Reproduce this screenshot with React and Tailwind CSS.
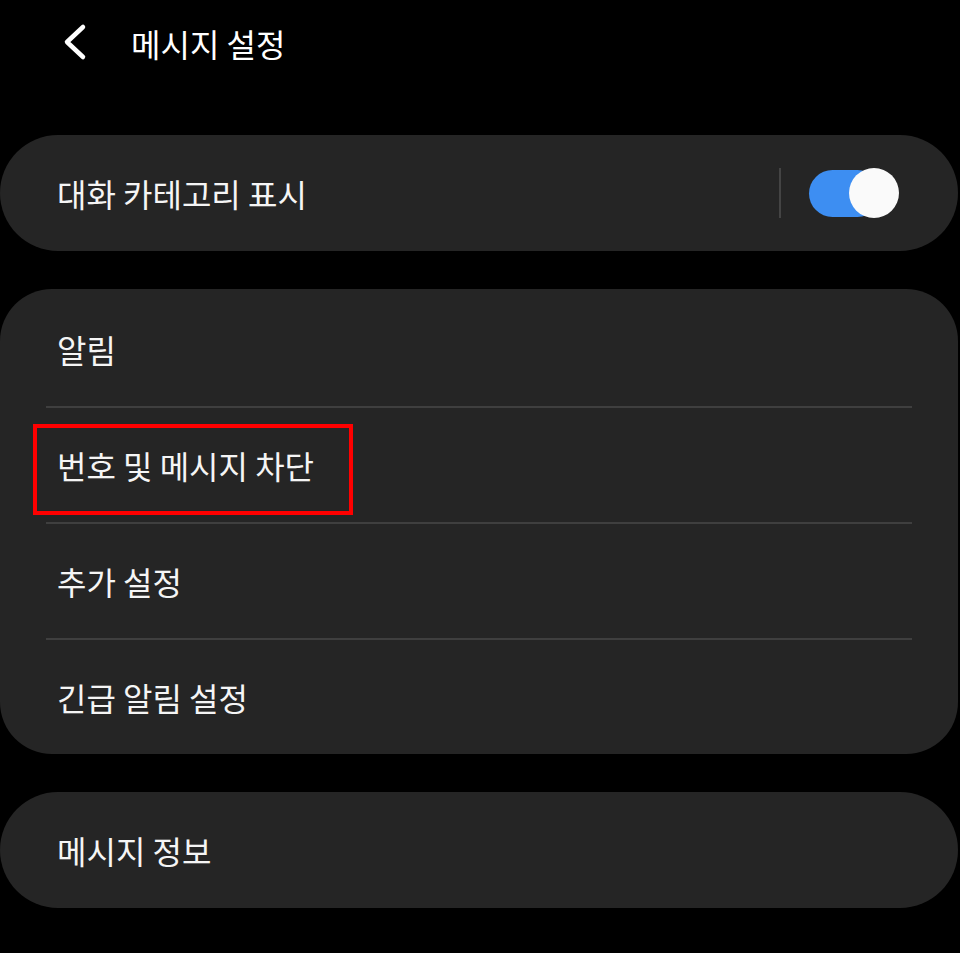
import React from "react";

const font = { fontFamily: '"Noto Sans CJK KR", "Noto Sans", sans-serif' };

function Row({ children, divider, highlight }) {
  return (
    <div className="relative">
      {divider && <div className="mx-[46px] h-[2px] bg-[#3f3f3f]" />}
      <div className="flex h-[114px] items-center pl-[57px] text-[32px] text-[#f5f5f5]">
        {children}
      </div>
      {highlight && (
        <div className="pointer-events-none absolute left-[33px] top-[18px] h-[91px] w-[320px] border-[4px] border-[#ff0000]" />
      )}
    </div>
  );
}

export default function App() {
  return (
    <div className="min-h-[953px] w-[960px] bg-black" style={font}>
      <div className="flex h-[86px] items-center">
        <svg width="40" height="40" viewBox="0 0 40 40" className="ml-[55px]">
          <path d="M28 8 L12 23 L28 38" fill="none" stroke="#fff" strokeWidth="4.5" strokeLinecap="round" strokeLinejoin="round" transform="translate(0,-4)" />
        </svg>
        <div className="ml-[36px] text-[32px] text-white leading-none">메시지 설정</div>
      </div>

      <div className="mt-[49px] flex flex-col gap-[38px] pr-[2px]">
        <div className="flex h-[116px] items-center rounded-[58px] bg-[#252525] pl-[57px] pr-[59px]">
          <div className="flex-1 text-[32px] text-[#f5f5f5]">대화 카테고리 표시</div>
          <div className="mr-[28px] h-[50px] w-[2px] bg-[#444]" />
          <div className="relative h-[50px] w-[90px]">
            <div className="absolute left-0 top-[2px] h-[47px] w-[72px] rounded-full bg-[#3d8ef2]" />
            <div className="absolute right-0 top-0 h-[50px] w-[50px] rounded-full bg-[#fafafa]" />
          </div>
        </div>

        <div className="rounded-[52px] bg-[#252525] pt-[3px]">
          <Row>알림</Row>
          <Row divider highlight>번호 및 메시지 차단</Row>
          <Row divider>추가 설정</Row>
          <Row divider>긴급 알림 설정</Row>
        </div>

        <div className="flex h-[116px] items-center rounded-[58px] bg-[#252525] pl-[57px] text-[32px] text-[#f5f5f5]">
          메시지 정보
        </div>
      </div>
    </div>
  );
}
